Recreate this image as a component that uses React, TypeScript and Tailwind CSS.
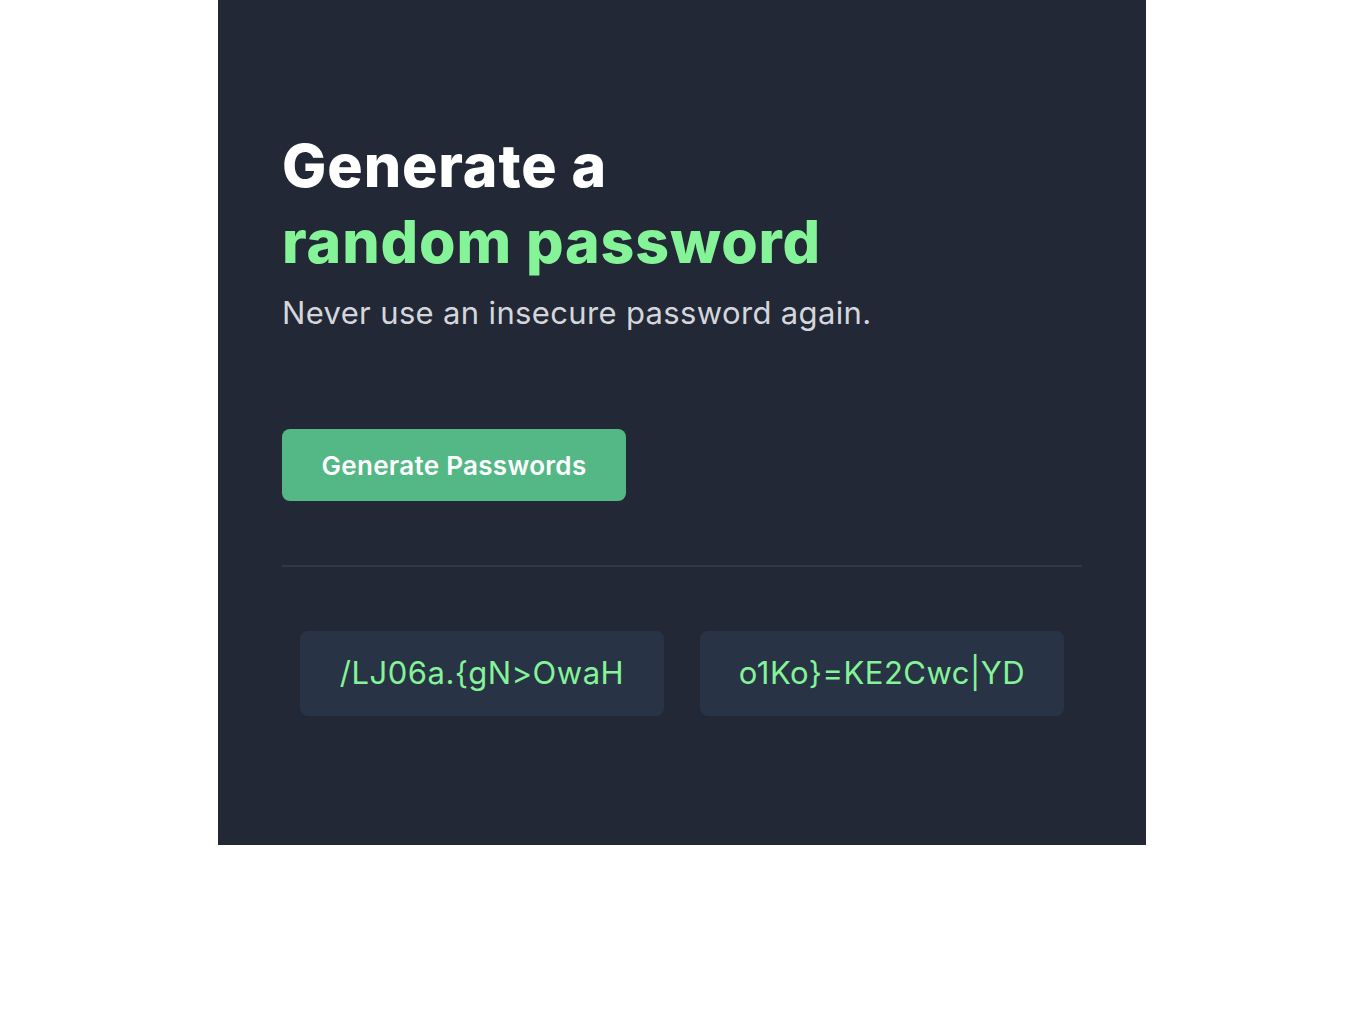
import { useState } from 'react';

const CHARS =
  'ABCDEFGHIJKLMNOPQRSTUVWXYZabcdefghijklmnopqrstuvwxyz0123456789~`!@#$%^&*()_-+={[}]|:;"\'<,>.?/';

function makePassword(length = 15) {
  let out = '';
  for (let i = 0; i < length; i++) {
    out += CHARS[Math.floor(Math.random() * CHARS.length)];
  }
  return out;
}

export default function App() {
  const [passwords, setPasswords] = useState(['/LJ06a.{gN>OwaH', 'o1Ko}=KE2Cwc|YD']);

  const handleGenerate = () => {
    setPasswords([makePassword(), makePassword()]);
  };

  return (
    <div className="min-h-[1024px] bg-white" style={{ fontFamily: 'Inter, "Noto Sans", sans-serif' }}>
      <main className="ml-[218px] w-[928px] bg-[#222835] px-16 pt-[128px] pb-[129px]">
        {/* Heading */}
        <h1 className="text-[59px] font-extrabold leading-[76px] tracking-[0.9px] text-white">
          Generate a
          <br />
          <span className="text-[#85f397]">random password</span>
        </h1>
        <p className="mt-[12px] text-[31px] leading-[42px] tracking-[0.35px] text-[#d5d6dc]">
          Never use an insecure password again.
        </p>

        <button
          onClick={handleGenerate}
          className="mt-[95px] h-[72px] w-[344px] rounded-lg bg-[#53b885] text-[26px] font-semibold tracking-[0.3px] text-white"
        >
          Generate Passwords
        </button>

        <hr className="mt-[64px] border-t-2 border-[#2e394a]" />

        {/* Password list */}
        <div className="mt-[64px] flex justify-center gap-9">
          {passwords.map((pw, i) => (
            <div
              key={i}
              className="flex h-[85px] w-[364px] items-center justify-center rounded-lg bg-[#283345] text-[31px] tracking-[0.5px] text-[#85f397]"
            >
              {pw}
            </div>
          ))}
        </div>
      </main>
    </div>
  );
}
